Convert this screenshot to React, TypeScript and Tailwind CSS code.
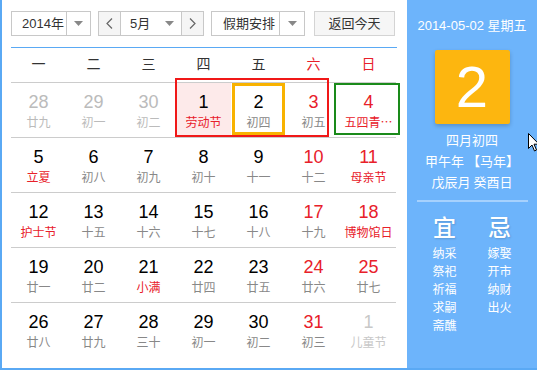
import React from "react";

type Day = { n: number; l: string; numColor?: string; lunarColor?: string };

const GRAY_NUM = "text-[#bbbbbb]";
const RED = "text-[#e8202a]";

const weeks: Day[][] = [
  [
    { n: 28, l: "廿九", numColor: GRAY_NUM, lunarColor: GRAY_NUM },
    { n: 29, l: "初一", numColor: GRAY_NUM, lunarColor: GRAY_NUM },
    { n: 30, l: "初二", numColor: GRAY_NUM, lunarColor: GRAY_NUM },
    { n: 1, l: "劳动节", lunarColor: RED },
    { n: 2, l: "初四" },
    { n: 3, l: "初五", numColor: RED },
    { n: 4, l: "五四青…", numColor: RED, lunarColor: RED },
  ],
  [
    { n: 5, l: "立夏", lunarColor: RED },
    { n: 6, l: "初八" },
    { n: 7, l: "初九" },
    { n: 8, l: "初十" },
    { n: 9, l: "十一" },
    { n: 10, l: "十二", numColor: RED },
    { n: 11, l: "母亲节", numColor: RED, lunarColor: RED },
  ],
  [
    { n: 12, l: "护士节", lunarColor: RED },
    { n: 13, l: "十五" },
    { n: 14, l: "十六" },
    { n: 15, l: "十七" },
    { n: 16, l: "十八" },
    { n: 17, l: "十九", numColor: RED },
    { n: 18, l: "博物馆日", numColor: RED, lunarColor: RED },
  ],
  [
    { n: 19, l: "廿一" },
    { n: 20, l: "廿二" },
    { n: 21, l: "小满", lunarColor: RED },
    { n: 22, l: "廿四" },
    { n: 23, l: "廿五" },
    { n: 24, l: "廿六", numColor: RED },
    { n: 25, l: "廿七", numColor: RED },
  ],
  [
    { n: 26, l: "廿八" },
    { n: 27, l: "廿九" },
    { n: 28, l: "三十" },
    { n: 29, l: "初一" },
    { n: 30, l: "初二" },
    { n: 31, l: "初三", numColor: RED },
    { n: 1, l: "儿童节", numColor: "text-[#c8c8c8]", lunarColor: "text-[#c8c8c8]" },
  ],
];

const weekdays = ["一", "二", "三", "四", "五", "六", "日"];

const Caret = () => (
  <svg width="9" height="5" viewBox="0 0 9 5">
    <path d="M0 0h9L4.5 5z" fill="#888" />
  </svg>
);

export default function App() {
  return (
    <div className="w-[537px] h-[370px] flex bg-white border-l-2 border-b-2 border-[#5aa9f4] overflow-hidden relative font-['Liberation_Sans','Noto_Sans_CJK_SC',sans-serif]">
      {/* left: calendar */}
      <div className="w-[405px] pl-[9px] pt-[11px]">
        {/* controls */}
        <div className="flex items-center h-[25px] text-[13px] text-[#333]">
          <div className="w-[80px] h-[25px] flex border border-[#c8c8c8]">
            <div className="flex-1 flex items-center pl-[10px]">2014年</div>
            <div className="w-[24px] border-l border-[#c8c8c8] flex items-center justify-center">
              <Caret />
            </div>
          </div>
          <div className="ml-[7px] w-[106px] h-[25px] flex border border-[#c8c8c8]">
            <div className="w-[22px] bg-[#f5f5f5] border-r border-[#c8c8c8] flex items-center justify-center">
              <svg width="7" height="11" viewBox="0 0 7 11">
                <path d="M6 0.5L1 5.5l5 5" stroke="#666" strokeWidth="1.2" fill="none" />
              </svg>
            </div>
            <div className="flex-1 flex items-center pl-[9px] gap-[15px]">
              <span>5月</span>
              <Caret />
            </div>
            <div className="w-[22px] bg-[#f5f5f5] border-l border-[#c8c8c8] flex items-center justify-center">
              <svg width="7" height="11" viewBox="0 0 7 11">
                <path d="M1 0.5l5 5-5 5" stroke="#666" strokeWidth="1.2" fill="none" />
              </svg>
            </div>
          </div>
          <div className="ml-[7px] w-[94px] h-[25px] flex border border-[#c8c8c8]">
            <div className="flex-1 flex items-center pl-[11px]">假期安排</div>
            <div className="w-[25px] border-l border-[#c8c8c8] flex items-center justify-center">
              <Caret />
            </div>
          </div>
          <button className="ml-[9px] w-[81px] h-[25px] bg-[#f6f6f6] border border-[#d4d4d4] text-[13px] text-[#333]">
            返回今天
          </button>
        </div>

        <div className="mt-[11px] w-[386px] h-px bg-[#5aa9f4]" />

        {/* weekday header */}
        <div className="flex h-[34px] items-center pb-[3px] text-[14px] font-['Noto_Sans_CJK_SC',sans-serif]">
          {weekdays.map((w, i) => (
            <div key={w} className={`w-[55px] text-center ${i >= 5 ? RED : "text-[#333]"}`}>
              {w}
            </div>
          ))}
        </div>

        {/* weeks */}
        {weeks.map((week, wi) => (
          <div key={wi} className="relative flex w-[385px] h-[55px] border-t border-[#cccccc]">
            {week.map((d, di) => (
              <div
                key={di}
                className={`w-[55px] flex flex-col items-center pt-[9px] ${wi === 0 && di === 3 ? "bg-[#fdeaea]" : ""}`}
              >
                <div className={`text-[18px] leading-[20px] ${d.numColor ?? "text-black"}`}>{d.n}</div>
                <div
                  className={`mt-[2px] text-[12px] leading-[16px] whitespace-nowrap font-['Noto_Sans_CJK_SC',sans-serif] ${d.lunarColor ?? "text-[#888]"}`}
                >
                  {d.l}
                </div>
              </div>
            ))}
            {wi === 0 && (
              <>
                <div className="absolute left-[164px] top-[-5px] w-[154px] h-[59px] border-2 border-[#f01818] pointer-events-none" />
                <div className="absolute left-[221px] top-0 w-[53px] h-[52px] border-[3px] border-[#f8b200] pointer-events-none" />
                <div className="absolute left-[323px] top-0 w-[66px] h-[52px] border-2 border-[#1a8a1a] pointer-events-none" />
              </>
            )}
          </div>
        ))}
      </div>

      {/* right: today panel */}
      <div className="flex-1 bg-[#6db4fb] text-white flex flex-col items-center pt-[17px]">
        <div className="text-[13px] leading-[16px]">
          2014-05-02 <span className="font-['Noto_Sans_CJK_SC',sans-serif]">星期五</span>
        </div>
        <div className="mt-[16px] w-[75px] h-[74px] bg-[#fdb60f] rounded-[2px] shadow-[0_2px_4px_rgba(0,0,0,0.2)] flex items-center justify-center text-[58px] leading-none">
          2
        </div>
        <div className="mt-[5px] flex flex-col items-center text-[13px] leading-[21px] font-['Noto_Sans_CJK_SC',sans-serif]">
          <div>四月初四</div>
          <div>甲午年 【马年】</div>
          <div>戊辰月 癸酉日</div>
        </div>
        <div className="mt-[8px] w-[111px] h-[2px] bg-[#a6d1fd]" />
        <div className="mt-[10px] flex gap-[30px] font-['Noto_Sans_CJK_SC',sans-serif]">
          <div className="flex flex-col items-center w-[25px]">
            <div className="text-[23px] leading-[28px] font-medium [text-shadow:1px_1px_2px_rgba(0,0,0,0.15)]">宜</div>
            <div className="mt-[4px] text-[12px] leading-[18px] flex flex-col">
              <span>纳采</span>
              <span>祭祀</span>
              <span>祈福</span>
              <span>求嗣</span>
              <span>斋醮</span>
            </div>
          </div>
          <div className="flex flex-col items-center w-[25px]">
            <div className="text-[23px] leading-[28px] font-medium [text-shadow:1px_1px_2px_rgba(0,0,0,0.15)]">忌</div>
            <div className="mt-[4px] text-[12px] leading-[18px] flex flex-col">
              <span>嫁娶</span>
              <span>开市</span>
              <span>纳财</span>
              <span>出火</span>
            </div>
          </div>
        </div>
      </div>

      {/* mouse cursor */}
      <svg className="absolute left-[526px] top-[133px]" width="12" height="19" viewBox="0 0 12 19">
        <path d="M0.5 0.5v15l3.5-3.5 2.5 6 2-1-2.5-5.8h5z" fill="white" stroke="black" strokeWidth="1" />
      </svg>
    </div>
  );
}
